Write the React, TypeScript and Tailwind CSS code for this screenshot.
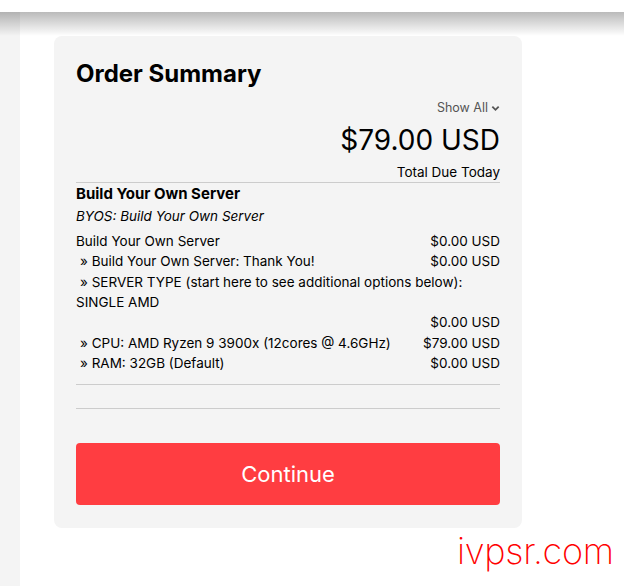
import React from "react";

const rows: { label: React.ReactNode; price: string; indent?: boolean }[] = [
  { label: "Build Your Own Server", price: "$0.00 USD" },
  { label: "» Build Your Own Server: Thank You!", price: "$0.00 USD", indent: true },
  {
    label: (
      <>
        <span className="pl-[4px]">» SERVER TYPE (start here to see additional options below):</span>
        <br />
        SINGLE AMD
      </>
    ),
    price: "$0.00 USD",
  },
  { label: "» CPU: AMD Ryzen 9 3900x (12cores @ 4.6GHz)", price: "$79.00 USD", indent: true },
  { label: "» RAM: 32GB (Default)", price: "$0.00 USD", indent: true },
];

export default function App() {
  return (
    <div
      className="relative h-[586px] w-[624px] overflow-hidden bg-white text-black"
      style={{ fontFamily: "Inter, 'Noto Sans', sans-serif" }}
    >
      <div className="h-[12px] bg-white" />
      <div className="flex h-[574px]">
        <div className="w-[20px] shrink-0 bg-[#f4f4f4]" />
        <div className="pl-[34px] pt-[24px]">
          <div className="flex w-[468px] flex-col rounded-[8px] bg-[#f4f4f4] px-[22px] pt-[23px] pb-[23px]">
            <h2 className="text-[24px] font-bold leading-[29px]">Order Summary</h2>
            <div className="mt-[11px] flex items-center justify-end gap-[3px] text-[12.5px] leading-[18px] text-[#555]">
              <span>Show All</span>
              <svg width="9" height="9" viewBox="0 0 10 10" className="mt-[1px]">
                <path d="M1.5 3 L5 6.5 L8.5 3" fill="none" stroke="#555" strokeWidth="2" />
              </svg>
            </div>
            <div className="mt-[5px] text-right text-[28px] leading-[36px]">$79.00 USD</div>
            <div className="mt-[4px] text-right text-[13.5px] leading-[20px]">Total Due Today</div>
            <div className="border-b border-[#ccc] pb-[11px]">
              <div className="border-t border-[#ccc]">
                <div className="text-[15px] font-bold leading-[22px]">Build Your Own Server</div>
                <div className="mt-[1px] text-[13.5px] italic leading-[20px]">BYOS: Build Your Own Server</div>
                <div className="mt-[5px] text-[13.5px] leading-[20.33px]">
                  {rows.map((r, i) => (
                    <div key={i} className="flex flex-wrap">
                      <span className={r.indent ? "pl-[4px]" : ""}>{r.label}</span>
                      <span className="ml-auto">{r.price}</span>
                    </div>
                  ))}
                </div>
              </div>
            </div>
            <div className="mt-[23px] border-t border-[#ccc]" />
            <button className="mt-[34px] h-[62px] w-full rounded-[4px] bg-[#ff3d41] text-[22px] text-white">
              Continue
            </button>
          </div>
        </div>
      </div>
      <div className="pointer-events-none absolute top-[12px] left-0 right-0 h-[24px] bg-gradient-to-b from-[rgba(0,0,0,0.27)] to-transparent" />
      <div className="pointer-events-none absolute left-[457px] top-[531px] text-[36px] font-extralight leading-[40px] tracking-[-0.3px] text-[#ff0000]">
        ivpsr.com
      </div>
    </div>
  );
}
